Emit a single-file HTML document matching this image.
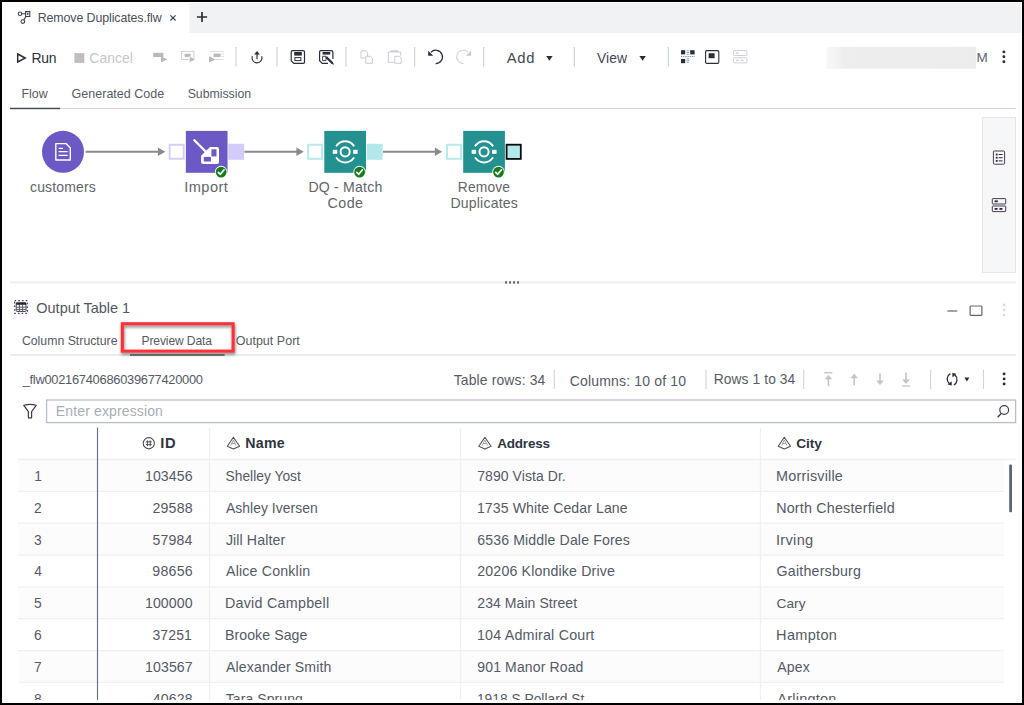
<!DOCTYPE html>
<html lang="en">
<head>
<meta charset="utf-8">
<title>Remove Duplicates.flw</title>
<style>
*{box-sizing:border-box;margin:0;padding:0}
html,body{width:1024px;height:705px;overflow:hidden;background:#000}
body{position:relative;font-family:"Liberation Sans",sans-serif;color:#4f5561}
#app{position:absolute;left:2px;top:2px;width:1020px;height:701px;background:#fff;overflow:hidden}
#gfx{position:absolute;left:0;top:0;width:1024px;height:705px;pointer-events:none}
section,header,nav,main,footer{position:static}
.t{position:absolute;white-space:pre;line-height:16px;font-weight:400;font-style:normal}
b.t{font-weight:700}
.dk{color:#2c313b}
.mn{color:#434853}
.tab{color:#4a4f5a}
.dis{color:#c3c7cf}
.sub{color:#565b65}
.lbl{color:#636569}
.ttl{color:#525761}
.cell{color:#555a65}
.hd{color:#2f3541}
.ph{color:#a8adb6}
.m{color:#5d6473}
#clip{position:absolute;left:0;top:0;width:1024px;height:700px;overflow:hidden}

</style>
</head>
<body>
<div id="app"></div>
<div id="clip">
<svg id="gfx" width="1024" height="705" viewBox="0 0 1024 705">
<rect x="189.5" y="3" width="831.5" height="30" fill="#f1f2f4" />
<rect x="25.6" y="11.4" width="4.2" height="2.2" fill="#c9cbd0"/><g fill="none" stroke="#3a3f4b" stroke-width="1.05"><circle cx="20" cy="13.7" r="1.75"/><circle cx="22.8" cy="21.5" r="1.85"/><rect x="25.6" y="11.5" width="4.2" height="5"/><path d="M21.8 13.7H25.6M25.8 16.7L23.8 19.9"/></g><rect x="27" y="13.3" width="1.4" height="1.5" fill="#23262d"/>
<path d="M170.4 15.3L175.6 20.5M175.6 15.3L170.4 20.5" fill="none" stroke="#3f444f" stroke-width="1.2" />
<path d="M196.9 17H207.1M202 11.9V22.1" fill="none" stroke="#2b2e35" stroke-width="1.7" />
<path d="M17.7 54L25.2 58L17.7 62Z" fill="none" stroke="#2a2e38" stroke-width="1.5" stroke-linejoin="miter"/>
<rect x="74.4" y="53.1" width="9.9" height="9.8" fill="#bfbfc1" />
<g fill="#b9babe"><rect x="153.2" y="52.8" width="10.2" height="4.2"/><path d="M161 56.2L167.4 59.4L161 62.6Z"/><rect x="181.5" y="51.4" width="12.4" height="8" fill="none" stroke="#c9ccd3" stroke-width="0.9"/><rect x="184.6" y="53.8" width="6" height="3.2"/><path d="M189.4 56.2L195.8 59.4L189.4 62.6Z" stroke="#fff" stroke-width="0.6"/><path d="M209.6 51.4H224M221.4 53.8H224M221.4 56.6H224M215 59.5H224" stroke="#d3d5db" stroke-width="0.8" fill="none"/><rect x="213.6" y="53.6" width="7" height="3.4"/><path d="M209 56.2L215.4 59.4L209 62.6Z"/></g>
<line x1="236" y1="47" x2="236" y2="66.7" stroke="#cfd3da" stroke-width="1.2" />
<line x1="277" y1="47" x2="277" y2="66.7" stroke="#cfd3da" stroke-width="1.2" />
<line x1="346" y1="47" x2="346" y2="66.7" stroke="#cfd3da" stroke-width="1.2" />
<line x1="414.6" y1="47" x2="414.6" y2="66.7" stroke="#cfd3da" stroke-width="1.2" />
<line x1="483.6" y1="47" x2="483.6" y2="66.7" stroke="#cfd3da" stroke-width="1.2" />
<line x1="574.3" y1="47" x2="574.3" y2="66.7" stroke="#cfd3da" stroke-width="1.2" />
<line x1="668.4" y1="47" x2="668.4" y2="66.7" stroke="#cfd3da" stroke-width="1.2" />
<g fill="none" stroke="#2a2e38" stroke-width="1.15"><path d="M252.4 56.3A4.9 4.9 0 1 0 261.6 56.3"/><path d="M257 59.2V54"/></g><path d="M254.1 54.4L257 51.1L259.9 54.4Z" fill="#2a2e38"/>
<g transform="translate(290.6,50)"><path d="M1.7 0.6H12.6Q13.9 0.6 13.9 1.9V12Q13.9 13.3 12.6 13.3H3.2L0.6 10.7V1.9Q0.6 0.6 1.7 0.6Z" fill="none" stroke="#2a2e38" stroke-width="1.2"/><rect x="3.6" y="2" width="7.6" height="3.6" fill="#2a2e38"/><rect x="4.3" y="7.6" width="6" height="3" fill="none" stroke="#2a2e38" stroke-width="1"/></g>
<g transform="translate(319,50)"><path d="M1.7 0.6H12.6Q13.9 0.6 13.9 1.9V9M9 13.3H3.2L0.6 10.7V1.9Q0.6 0.6 1.7 0.6" fill="none" stroke="#2a2e38" stroke-width="1.2"/><rect x="3.6" y="2" width="7.6" height="2.6" fill="#2a2e38"/><path d="M3.6 6.3H7V10.6H3.6Z" fill="none" stroke="#2a2e38" stroke-width="0.9"/><path d="M7.2 7L13.4 13.2" stroke="#2a2e38" stroke-width="2.2"/><path d="M12.2 12L14.6 14.4" stroke="#2a2e38" stroke-width="1.2"/></g>
<g fill="#fff" stroke="#c9ccd3" stroke-width="1"><path d="M361 50.8H365.6L367.6 52.8V58H361Z"/><path d="M365.8 56.3H370.4L372.4 58.3V63.3H365.8Z"/></g>
<g fill="none" stroke="#c9ccd3" stroke-width="1"><path d="M394.5 62.3H388.3V52H400.6V55.5"/><path d="M391.5 52V51H397.5V52" stroke-width="1.4"/><path d="M394.8 56.3H399.2L401.2 58.3V63.3H394.8Z" fill="#fff"/></g>
<path d="M431 52.2A6.7 6.7 0 1 1 435.6 63.6" fill="none" stroke="#2a2e38" stroke-width="1.25"/><path d="M428.2 50.8V55.8H433.2Z" fill="#2a2e38"/>
<path d="M468.2 52.2A6.7 6.7 0 1 0 463.6 63.6" fill="none" stroke="#d3d5db" stroke-width="1.1"/><path d="M471 50.8V55.8H466Z" fill="#c6c8cd"/>
<path d="M546.2 56H552.6L549.4 60.8Z" fill="#2a2e38" stroke="none" stroke-width="1" />
<path d="M639.4 56H645.8L642.6 60.8Z" fill="#2a2e38" stroke="none" stroke-width="1" />
<g fill="#2a2e38"><rect x="681" y="50.2" width="4.2" height="4.2"/><rect x="690.2" y="50.2" width="4.4" height="4.2"/><rect x="681" y="59" width="4.2" height="4.2"/></g><path d="M681 56.5H695" stroke="#6a7ea0" stroke-width="0.9" stroke-dasharray="1 0.8" fill="none"/><path d="M686.6 50.8h2.6M686.6 52.5h2.6M686.6 54.2h2.6M686.6 58.9h2.6M686.6 60.6h2.6M686.6 62.3h2.6" stroke="#7d90b0" stroke-width="0.8" fill="none"/>
<rect x="705.6" y="50.6" width="13.2" height="12.8" rx="1.1" fill="none" stroke="#2a2e38" stroke-width="1.1"/><rect x="708.6" y="53.2" width="6" height="5" fill="#2a2e38"/>
<g fill="none" stroke="#cdd0d6" stroke-width="1"><rect x="733.5" y="50.5" width="13.4" height="5" rx="0.8"/><rect x="733.5" y="57.7" width="13.4" height="5.2" rx="0.8"/></g><g fill="#cdd0d6"><rect x="736" y="52.3" width="2.6" height="1.5"/><rect x="736" y="59.6" width="2.6" height="1.5"/><rect x="741" y="59.6" width="2.6" height="1.5"/></g>
<defs><linearGradient id="blr" x1="0" x2="1" y1="0" y2="0"><stop offset="0" stop-color="#f8f8f8"/><stop offset="0.12" stop-color="#eeeeee"/><stop offset="1" stop-color="#ececec"/></linearGradient></defs>
<rect x="826.3" y="46.8" width="149.8" height="22" fill="url(#blr)" />
<circle cx="1003.9" cy="51.9" r="1.45" fill="#2a2e38" stroke="none" stroke-width="1" />
<circle cx="1003.9" cy="56.8" r="1.45" fill="#2a2e38" stroke="none" stroke-width="1" />
<circle cx="1003.9" cy="61.7" r="1.45" fill="#2a2e38" stroke="none" stroke-width="1" />
<rect x="10" y="108" width="1006" height="1" fill="#d3d6dc" />
<rect x="10" y="107.75" width="50" height="1.45" fill="#464a52" />
<circle cx="63" cy="151.85" r="21" fill="#6c59c6" stroke="none" stroke-width="1" />
<g fill="none" stroke="#fff" stroke-width="1.4" stroke-linejoin="round"><path d="M55.8 143.6H66L70.3 147.9V160H55.8Z"/><path d="M58.6 148.3H63M58.6 151.7H67.6M58.6 155.3H67.6" stroke-width="1.3"/></g>
<line x1="85.6" y1="151.8" x2="159.3" y2="151.8" stroke="#8b8b8b" stroke-width="1.9" />
<path d="M157.9 147.5L165.3 151.8L157.9 156.1Z" fill="#8b8b8b" stroke="none" stroke-width="1" />
<line x1="244.3" y1="151.8" x2="297.8" y2="151.8" stroke="#8b8b8b" stroke-width="1.9" />
<path d="M296.40000000000003 147.5L303.8 151.8L296.40000000000003 156.1Z" fill="#8b8b8b" stroke="none" stroke-width="1" />
<line x1="383" y1="151.8" x2="436.2" y2="151.8" stroke="#8b8b8b" stroke-width="1.9" />
<path d="M434.8 147.5L442.2 151.8L434.8 156.1Z" fill="#8b8b8b" stroke="none" stroke-width="1" />
<rect x="169.65" y="144.8" width="14" height="14" fill="#fff" stroke="#d6cffa" stroke-width="2"/>
<rect x="228.25" y="143.8" width="15.9" height="16" fill="#d3cbfa" />
<rect x="185.85" y="130.9" width="41.7" height="41.9" fill="#6c59c6" />
<g transform="translate(206.7,151.8)"><path d="M-12.3 -11.5L0.4 1.2" fill="none" stroke="#fff" stroke-width="2.3" stroke-linecap="round"/><path d="M3.1 -4.8H10.3Q12.3 -4.8 12.3 -2.8V10.3Q12.3 12.3 10.3 12.3H-3.6Q-5.6 12.3 -5.6 10.3V3.8H-5.4L3.1 -4.6Z" fill="#fff"/><rect x="4.7" y="-2.5" width="5.1" height="7.1" fill="#6c59c6"/><rect x="-2.9" y="5.1" width="7.1" height="4.6" fill="#6c59c6"/></g>
<circle cx="221.14999999999998" cy="172.1" r="6.3" fill="#fff" stroke="none" stroke-width="1" />
<circle cx="221.14999999999998" cy="172.1" r="5.4" fill="#177a1e" stroke="none" stroke-width="1" />
<path d="M218.34999999999997 172.3L220.34999999999997 174.3L224.04999999999998 169.8" fill="none" stroke="#fff" stroke-width="1.7" stroke-linecap="round" stroke-linejoin="round"/>
<rect x="308.1" y="144.8" width="14" height="14" fill="#fff" stroke="#b9ebee" stroke-width="2"/>
<rect x="366.7" y="143.8" width="15.9" height="16" fill="#b3e8eb" />
<rect x="324.3" y="130.9" width="41.7" height="41.9" fill="#22918f" />
<g transform="translate(345.15000000000003,151.8)"><g fill="none" stroke="#fff" stroke-width="2" stroke-linecap="round"><circle r="4.6"/><path d="M-8.6 -6.2A10.6 10.6 0 0 1 8.6 -6.2"/><path d="M-8.6 6.2A10.6 10.6 0 0 0 8.6 6.2"/></g><rect x="-12.4" y="-2" width="4.5" height="4" fill="#fff"/><rect x="8" y="-2" width="4.5" height="4" fill="#fff"/></g>
<circle cx="359.6" cy="172.1" r="6.3" fill="#fff" stroke="none" stroke-width="1" />
<circle cx="359.6" cy="172.1" r="5.4" fill="#177a1e" stroke="none" stroke-width="1" />
<path d="M356.8 172.3L358.8 174.3L362.5 169.8" fill="none" stroke="#fff" stroke-width="1.7" stroke-linecap="round" stroke-linejoin="round"/>
<rect x="447.0" y="144.8" width="14" height="14" fill="#fff" stroke="#b9ebee" stroke-width="2"/>
<rect x="506.59999999999997" y="144.7" width="14.2" height="14.2" fill="#afebeb" stroke="#0b0b0b" stroke-width="1.8"/>
<rect x="463.2" y="130.9" width="41.7" height="41.9" fill="#22918f" />
<g transform="translate(484.05,151.8)"><g fill="none" stroke="#fff" stroke-width="2" stroke-linecap="round"><circle r="4.6"/><path d="M-8.6 -6.2A10.6 10.6 0 0 1 8.6 -6.2"/><path d="M-8.6 6.2A10.6 10.6 0 0 0 8.6 6.2"/></g><rect x="-12.4" y="-2" width="4.5" height="4" fill="#fff"/><rect x="8" y="-2" width="4.5" height="4" fill="#fff"/></g>
<circle cx="498.5" cy="172.1" r="6.3" fill="#fff" stroke="none" stroke-width="1" />
<circle cx="498.5" cy="172.1" r="5.4" fill="#177a1e" stroke="none" stroke-width="1" />
<path d="M495.7 172.3L497.7 174.3L501.4 169.8" fill="none" stroke="#fff" stroke-width="1.7" stroke-linecap="round" stroke-linejoin="round"/>
<rect x="982.5" y="117.5" width="33" height="155" fill="#f6f7f9" stroke="#e4e6ea" stroke-width="1"/>
<g fill="none" stroke="#3a3348" stroke-width="0.95"><rect x="993.4" y="151" width="11.2" height="13.2" rx="1"/></g><g fill="#2e2440"><rect x="995.8" y="153.6" width="1.8" height="1.8"/><rect x="995.8" y="156.8" width="1.8" height="1.8"/><rect x="995.8" y="160" width="1.8" height="1.8"/><rect x="998.6" y="154" width="4" height="1"/><rect x="998.6" y="157.2" width="4" height="1"/><rect x="998.6" y="160.4" width="4" height="1"/></g>
<g fill="none" stroke="#3a3348" stroke-width="0.95"><rect x="992.3" y="198.6" width="13.4" height="5.4" rx="0.6"/><rect x="992.3" y="206" width="13.4" height="5.6" rx="0.6"/></g><g fill="#2e2440"><rect x="994.6" y="200.4" width="3.2" height="1.8"/><rect x="994.6" y="208" width="3" height="1.8"/><rect x="999.4" y="208" width="3" height="1.8"/></g>
<rect x="10" y="281.3" width="1006" height="2.2" fill="#eeeff2" />
<rect x="505.3" y="281.3" width="1.5" height="2.3" fill="#34363c" />
<rect x="509.3" y="281.3" width="1.5" height="2.3" fill="#34363c" />
<rect x="513.3" y="281.3" width="1.5" height="2.3" fill="#34363c" />
<rect x="517.3" y="281.3" width="1.5" height="2.3" fill="#34363c" />
<rect x="14.6" y="300.7" width="12.8" height="12.6" fill="none" stroke="#6a2c70" stroke-width="1.3" stroke-dasharray="1.6 2.1"/><rect x="16.2" y="302.8" width="9.8" height="8.6" rx="0.8" fill="#fff" stroke="#3a3f49" stroke-width="1"/><rect x="16.2" y="302.6" width="9.8" height="2.2" fill="#23262d"/><path d="M19.4 304.8V311.4M22.6 304.8V311.4M16.2 307V307M16.4 307.2H25.8M16.4 309.4H25.8" stroke="#4a4f5a" stroke-width="0.9" fill="none"/>
<line x1="947.3" y1="311" x2="957.3" y2="311" stroke="#62666e" stroke-width="1.2" />
<rect x="970.1" y="306" width="11.8" height="9.4" fill="none" stroke="#62666e" stroke-width="1.2" rx="0.9"/>
<circle cx="1004.1" cy="304.9" r="1.4" fill="#dcdee3" stroke="none" stroke-width="1" />
<circle cx="1004.1" cy="310" r="1.4" fill="#dcdee3" stroke="none" stroke-width="1" />
<circle cx="1004.1" cy="315.1" r="1.4" fill="#dcdee3" stroke="none" stroke-width="1" />
<rect x="10" y="354.5" width="1006" height="1" fill="#d6d9de" />
<rect x="130" y="354.2" width="94.6" height="1.55" fill="#5d6066" />
<defs><filter id="sh" x="-10%" y="-30%" width="120%" height="170%"><feDropShadow dx="0.6" dy="1.8" stdDeviation="1.5" flood-color="#000" flood-opacity="0.5"/></filter></defs><rect x="122.35" y="323.75" width="110.8" height="27.4" fill="none" stroke="#fd3238" stroke-width="3.1" filter="url(#sh)"/>
<line x1="554.3" y1="369.8" x2="554.3" y2="389" stroke="#cfd3da" stroke-width="1.1" />
<line x1="706" y1="369.8" x2="706" y2="389" stroke="#cfd3da" stroke-width="1.1" />
<line x1="803.7" y1="369.8" x2="803.7" y2="389" stroke="#cfd3da" stroke-width="1.1" />
<line x1="930.6" y1="369.8" x2="930.6" y2="389" stroke="#cfd3da" stroke-width="1.1" />
<line x1="983.5" y1="369.8" x2="983.5" y2="389" stroke="#cfd3da" stroke-width="1.1" />
<g fill="#c2c4cc" stroke="none"><rect x="824.2" y="372.1" width="8.2" height="1.3"/><rect x="827.6" y="377" width="1.6" height="9"/><path d="M828.4 374.9L832.2 379.2H824.6Z"/><rect x="853.4" y="376" width="1.6" height="9.2"/><path d="M854.2 373.8L858 378.2H850.4Z"/><rect x="879.2" y="373.5" width="1.6" height="9"/><path d="M880 384.9L883.8 380.4H876.2Z"/><rect x="905.2" y="372.4" width="1.6" height="9"/><path d="M906 383.9L909.8 379.4H902.2Z"/><rect x="901.9" y="385.3" width="8.2" height="1.3"/></g>
<g fill="none" stroke="#2a2e38" stroke-width="1.3"><path d="M950.4 373.6A6.2 6.2 0 0 0 949.2 383.6"/><path d="M953.8 385A6.2 6.2 0 0 0 955 375"/></g><path d="M947.6 384.6L951.6 381.2L951.8 385.6Z" fill="#2a2e38"/><path d="M956.4 373.8L952.6 377.4L952.2 373Z" fill="#2a2e38"/>
<path d="M964.4 377.5H969.4L966.9 381.4Z" fill="#2a2e38" stroke="none" stroke-width="1" />
<circle cx="1004.1" cy="373.9" r="1.45" fill="#2a2e38" stroke="none" stroke-width="1" />
<circle cx="1004.1" cy="378.9" r="1.45" fill="#2a2e38" stroke="none" stroke-width="1" />
<circle cx="1004.1" cy="384" r="1.45" fill="#2a2e38" stroke="none" stroke-width="1" />
<path d="M23.8 405.3Q30 403.6 36.2 405.3L31.6 411.6V417.8H28.4V411.6Z" fill="none" stroke="#3c3f4a" stroke-width="1.2" stroke-linejoin="round"/>
<rect x="46.6" y="400" width="969" height="22.6" fill="#fff" stroke="#b9bdc8" stroke-width="1.3"/>
<circle cx="1004.2" cy="410" r="4.4" fill="none" stroke="#3c3f4a" stroke-width="1.2"/><path d="M1001.2 413.4L997.6 417.2" stroke="#3c3f4a" stroke-width="1.4"/>
<rect x="18" y="459.5" width="986" height="31.899999999999977" fill="#fcfcfd" />
<rect x="18" y="523.2" width="986" height="31.899999999999977" fill="#fcfcfd" />
<rect x="18" y="586.9" width="986" height="31.800000000000068" fill="#fcfcfd" />
<rect x="18" y="650.6" width="986" height="31.799999999999955" fill="#fcfcfd" />
<line x1="18" y1="459.5" x2="1016" y2="459.5" stroke="#eeeff2" stroke-width="1.3" />
<line x1="18" y1="491.4" x2="1004" y2="491.4" stroke="#eff0f3" stroke-width="1.3" />
<line x1="18" y1="523.2" x2="1004" y2="523.2" stroke="#eff0f3" stroke-width="1.3" />
<line x1="18" y1="555.1" x2="1004" y2="555.1" stroke="#eff0f3" stroke-width="1.3" />
<line x1="18" y1="586.9" x2="1004" y2="586.9" stroke="#eff0f3" stroke-width="1.3" />
<line x1="18" y1="618.7" x2="1004" y2="618.7" stroke="#eff0f3" stroke-width="1.3" />
<line x1="18" y1="650.6" x2="1004" y2="650.6" stroke="#eff0f3" stroke-width="1.3" />
<line x1="18" y1="682.4" x2="1004" y2="682.4" stroke="#eff0f3" stroke-width="1.3" />
<line x1="209.5" y1="428" x2="209.5" y2="703" stroke="#eff0f3" stroke-width="1.3" />
<line x1="460.5" y1="428" x2="460.5" y2="703" stroke="#eff0f3" stroke-width="1.3" />
<line x1="760.5" y1="428" x2="760.5" y2="703" stroke="#eff0f3" stroke-width="1.3" />
<line x1="97.5" y1="427.5" x2="97.5" y2="700" stroke="#667086" stroke-width="1.15" />
<rect x="97" y="701.2" width="1.1" height="1.8" fill="#7a8397" />
<rect x="1009.2" y="464.4" width="2.8" height="47.8" fill="#5a647a" rx="1"/>
<circle cx="148.8" cy="443.25" r="5.6" fill="none" stroke="#4a4f5a" stroke-width="1.1"/><path d="M147.4 440.3V446.2M150.2 440.3V446.2M145.9 441.85H151.7M145.9 444.65H151.7" stroke="#4a4f5a" stroke-width="1" fill="none"/>
<g transform="translate(227,437)" fill="none" stroke="#4a4f5a" stroke-width="1.05" stroke-linejoin="round"><path d="M6.4 0.3L12.6 9.3L6.4 11.9L0.3 9.3Z"/><path d="M6.4 3L3.7 8.6M6.4 3L9.1 8.6M4.9 6.6H7.9" stroke-width="0.75" stroke="#7a7f8c"/></g>
<g transform="translate(478.5,437)" fill="none" stroke="#4a4f5a" stroke-width="1.05" stroke-linejoin="round"><path d="M6.4 0.3L12.6 9.3L6.4 11.9L0.3 9.3Z"/><path d="M6.4 3L3.7 8.6M6.4 3L9.1 8.6M4.9 6.6H7.9" stroke-width="0.75" stroke="#7a7f8c"/></g>
<g transform="translate(777.9,437)" fill="none" stroke="#4a4f5a" stroke-width="1.05" stroke-linejoin="round"><path d="M6.4 0.3L12.6 9.3L6.4 11.9L0.3 9.3Z"/><path d="M6.4 3L3.7 8.6M6.4 3L9.1 8.6M4.9 6.6H7.9" stroke-width="0.75" stroke="#7a7f8c"/></g>
</svg>
<header>
<span class="t tab" style="left:37.73px;top:10.10px;font-size:12.4px;letter-spacing:-0.102px">Remove Duplicates.flw</span>
</header>
<nav>
<span class="t dk" style="left:31.61px;top:49.80px;font-size:13.9px;letter-spacing:-0.296px">Run</span>
<span class="t dis" style="left:89.29px;top:49.80px;font-size:13.9px;letter-spacing:0.077px">Cancel</span>
<span class="t mn" style="left:506.72px;top:49.60px;font-size:14.8px;letter-spacing:0.752px">Add</span>
<span class="t mn" style="left:596.94px;top:49.60px;font-size:13.9px;letter-spacing:0.056px">View</span>
<span class="t m" style="left:976.39px;top:50.00px;font-size:13.5px">M</span>
<span class="t sub" style="left:21.48px;top:85.80px;font-size:12.4px;letter-spacing:0.022px">Flow</span>
<span class="t sub" style="left:71.62px;top:85.80px;font-size:12.5px;letter-spacing:0.007px">Generated Code</span>
<span class="t sub" style="left:187.69px;top:85.80px;font-size:12.3px;letter-spacing:-0.023px">Submission</span>
</nav>
<main>
<span class="t lbl" style="left:30.01px;top:178.75px;font-size:14.0px;letter-spacing:0.153px">customers</span>
<span class="t lbl" style="left:184.35px;top:178.75px;font-size:14.6px;letter-spacing:0.409px">Import</span>
<span class="t lbl" style="left:308.44px;top:178.75px;font-size:14.1px;letter-spacing:0.203px">DQ - Match</span>
<span class="t lbl" style="left:327.57px;top:194.55px;font-size:14.3px;letter-spacing:0.425px">Code</span>
<span class="t lbl" style="left:457.87px;top:179.75px;font-size:13.8px;letter-spacing:0.154px">Remove</span>
<span class="t lbl" style="left:450.44px;top:194.55px;font-size:14.1px;letter-spacing:0.173px">Duplicates</span>
</main>
<section>
<span class="t ttl" style="left:36.31px;top:300.00px;font-size:14.5px;letter-spacing:-0.013px">Output Table 1</span>
<span class="t sub" style="left:21.88px;top:333.00px;font-size:12.3px">Column Structure</span>
<span class="t sub" style="left:141.51px;top:333.00px;font-size:12.1px;letter-spacing:-0.130px">Preview Data</span>
<span class="t sub" style="left:235.66px;top:333.00px;font-size:12.5px;letter-spacing:0.025px">Output Port</span>
<span class="t sub" style="left:22.70px;top:372.40px;font-size:12.9px;letter-spacing:-0.289px">_flw00216740686039677420000</span>
<span class="t sub" style="left:453.69px;top:372.20px;font-size:13.9px;letter-spacing:0.158px">Table rows: 34</span>
<span class="t sub" style="left:569.69px;top:372.60px;font-size:14.0px;letter-spacing:0.171px">Columns: 10 of 10</span>
<span class="t sub" style="left:713.67px;top:372.40px;font-size:13.8px;letter-spacing:0.100px">Rows 1 to 34</span>
<span class="t ph" style="left:55.85px;top:402.80px;font-size:14.0px;letter-spacing:0.133px">Enter expression</span>
<b class="t hd" style="left:160.27px;top:435.00px;font-size:14.7px;letter-spacing:0.663px">ID</b>
<b class="t hd" style="left:245.30px;top:435.00px;font-size:14.2px;letter-spacing:0.260px">Name</b>
<b class="t hd" style="left:497.16px;top:436.00px;font-size:13.5px;letter-spacing:-0.190px">Address</b>
<b class="t hd" style="left:796.19px;top:436.00px;font-size:13.7px;letter-spacing:-0.075px">City</b>
<span class="t cell" style="left:34.15px;top:469.20px;font-size:13.8px">1</span>
<span class="t cell" style="left:144.93px;top:468.20px;font-size:14.1px;letter-spacing:0.132px">103456</span>
<span class="t cell" style="left:225.47px;top:469.20px;font-size:13.8px;letter-spacing:0.017px">Shelley Yost</span>
<span class="t cell" style="left:477.28px;top:468.20px;font-size:14.0px;letter-spacing:0.062px">7890 Vista Dr.</span>
<span class="t cell" style="left:776.12px;top:468.20px;font-size:14.4px;letter-spacing:0.201px">Morrisville</span>
<span class="t cell" style="left:33.91px;top:501.00px;font-size:13.8px">2</span>
<span class="t cell" style="left:152.49px;top:500.00px;font-size:14.2px;letter-spacing:0.170px">29588</span>
<span class="t cell" style="left:226.07px;top:500.00px;font-size:13.9px;letter-spacing:0.036px">Ashley Iversen</span>
<span class="t cell" style="left:476.93px;top:500.00px;font-size:14.1px;letter-spacing:0.091px">1735 White Cedar Lane</span>
<span class="t cell" style="left:776.13px;top:500.00px;font-size:14.3px;letter-spacing:0.195px">North Chesterfield</span>
<span class="t cell" style="left:34.07px;top:533.00px;font-size:13.8px">3</span>
<span class="t cell" style="left:152.44px;top:532.00px;font-size:14.1px;letter-spacing:0.194px">57984</span>
<span class="t cell" style="left:225.88px;top:532.00px;font-size:14.2px;letter-spacing:0.101px">Jill Halter</span>
<span class="t cell" style="left:477.28px;top:532.00px;font-size:14.1px;letter-spacing:0.135px">6536 Middle Dale Fores</span>
<span class="t cell" style="left:775.95px;top:532.00px;font-size:14.6px;letter-spacing:0.310px">Irving</span>
<span class="t cell" style="left:34.28px;top:564.40px;font-size:13.8px">4</span>
<span class="t cell" style="left:152.33px;top:563.40px;font-size:14.2px;letter-spacing:0.209px">98656</span>
<span class="t cell" style="left:226.07px;top:563.40px;font-size:14.2px;letter-spacing:0.174px">Alice Conklin</span>
<span class="t cell" style="left:477.29px;top:563.40px;font-size:14.2px;letter-spacing:0.143px">20206 Klondike Drive</span>
<span class="t cell" style="left:776.59px;top:563.40px;font-size:14.2px;letter-spacing:0.210px">Gaithersburg</span>
<span class="t cell" style="left:34.05px;top:596.20px;font-size:13.8px">5</span>
<span class="t cell" style="left:144.93px;top:595.20px;font-size:14.1px;letter-spacing:0.119px">100000</span>
<span class="t cell" style="left:224.93px;top:595.20px;font-size:14.3px;letter-spacing:0.258px">David Campbell</span>
<span class="t cell" style="left:477.30px;top:595.20px;font-size:14.0px;letter-spacing:0.069px">234 Main Street</span>
<span class="t cell" style="left:776.60px;top:596.20px;font-size:13.7px;letter-spacing:0.005px">Cary</span>
<span class="t cell" style="left:33.90px;top:628.20px;font-size:13.8px">6</span>
<span class="t cell" style="left:152.47px;top:627.20px;font-size:14.0px;letter-spacing:0.120px">37251</span>
<span class="t cell" style="left:224.94px;top:627.20px;font-size:14.1px;letter-spacing:0.093px">Brooke Sage</span>
<span class="t cell" style="left:476.91px;top:627.20px;font-size:14.3px;letter-spacing:0.188px">104 Admiral Court</span>
<span class="t cell" style="left:776.11px;top:627.20px;font-size:14.5px;letter-spacing:0.331px">Hampton</span>
<span class="t cell" style="left:33.89px;top:660.00px;font-size:13.8px">7</span>
<span class="t cell" style="left:144.93px;top:659.00px;font-size:14.1px;letter-spacing:0.150px">103567</span>
<span class="t cell" style="left:226.07px;top:659.00px;font-size:14.1px;letter-spacing:0.138px">Alexander Smith</span>
<span class="t cell" style="left:477.34px;top:659.00px;font-size:14.0px;letter-spacing:0.136px">901 Manor Road</span>
<span class="t cell" style="left:777.27px;top:659.00px;font-size:14.1px;letter-spacing:0.168px">Apex</span>
<span class="t cell" style="left:34.00px;top:691.90px;font-size:13.8px">8</span>
<span class="t cell" style="left:152.68px;top:690.90px;font-size:14.1px;letter-spacing:0.183px">40628</span>
<span class="t cell" style="left:225.79px;top:690.90px;font-size:14.0px;letter-spacing:0.084px">Tara Sprung</span>
<span class="t cell" style="left:476.95px;top:691.90px;font-size:13.8px">1918 S Pollard St</span>
<span class="t cell" style="left:777.27px;top:690.90px;font-size:14.5px;letter-spacing:0.242px">Arlington</span>
</section>
</div>
</body>
</html>
